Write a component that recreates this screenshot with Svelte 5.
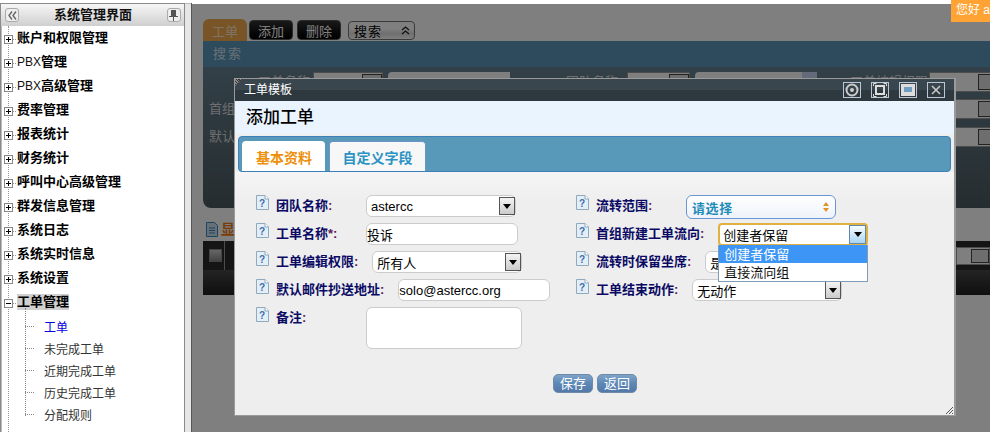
<script>
  const menus = [
    { parts: [{ t: '账户和权限管理' }] },
    { parts: [{ t: 'PBX', latin: true }, { t: '管理' }] },
    { parts: [{ t: 'PBX', latin: true }, { t: '高级管理' }] },
    { parts: [{ t: '费率管理' }] },
    { parts: [{ t: '报表统计' }] },
    { parts: [{ t: '财务统计' }] },
    { parts: [{ t: '呼叫中心高级管理' }] },
    { parts: [{ t: '群发信息管理' }] },
    { parts: [{ t: '系统日志' }] },
    { parts: [{ t: '系统实时信息' }] },
    { parts: [{ t: '系统设置' }] }
  ];
  const subs = ['工单', '未完成工单', '近期完成工单', '历史完成工单', '分配规则'];
</script>

{#snippet help()}
  <svg class="help" width="13" height="15" viewBox="0 0 13 15">
    <path d="M.5.5h8.500l3.500 3.500v10.500h-12z" fill="#e4eef6" stroke="#8fa9bd" />
    <path d="M9 .5v3.500h3.500" fill="#fff" stroke="#8fa9bd" />
    <text x="6" y="12" text-anchor="middle" class="helpq">?</text>
  </svg>
{/snippet}

{#snippet arrow()}
  <span class="arrow"><i></i></span>
{/snippet}

<div class="app">
  <aside class="side">
    <header class="sidehead">
      <span class="sidebtn">
        <svg width="9" height="9" viewBox="0 0 9 9"><path d="M4 .5L1 4.500l3 4M8 .5L5 4.500l3 4" fill="none" stroke="#666" stroke-width="1.400" /></svg>
      </span>
      <span class="sidetitle">系统管理界面</span>
      <span class="sidebtn">
        <svg width="9" height="11" viewBox="0 0 9 11"><path d="M2 0h5v6h2v1H5v4H4V7H0V6h2z" fill="#555" /></svg>
      </span>
    </header>
    <ul class="tree">
      {#each menus as m}
        <li class="node">
          <span class="box plus"></span><span class="dots"></span>
          <span class="nodetext">{#each m.parts as p}{#if p.latin}<span class="latin">{p.t}</span>{:else}{p.t}{/if}{/each}</span>
        </li>
      {/each}
      <li class="node">
        <span class="box"></span><span class="dots"></span>
        <span class="nodetext current">工单管理</span>
      </li>
      <ul class="subtree">
        {#each subs as s, i}
          <li class="sub" class:active={i === 0}><span class="subdots"></span>{s}</li>
        {/each}
      </ul>
    </ul>
  </aside>

  <div class="split"></div>

  <main class="main">
    <nav class="tabs">
      <span class="tab on">工单</span>
      <span class="tab blk">添加</span>
      <span class="tab blk">删除</span>
      <span class="searchtoggle">搜索
        <svg width="9" height="9" viewBox="0 0 9 9"><path d="M1 4l3.500-3L8 4M1 8l3.500-3L8 8" fill="none" stroke="#222" stroke-width="1.300" /></svg>
      </span>
    </nav>
    <div class="searchbar">搜索</div>
    <section class="panel">
      <div class="prow first">
        <span class="plabel l1">工单名称:</span>
        <span class="psel"></span>
        <span class="pinput"></span>
        <span class="plabel l2">团队名称:</span>
        <span class="psel mid"></span>
        <span class="pinput"><i></i></span>
        <span class="plabel l3">工单编辑权限:</span>
        <span class="psel"></span>
      </div>
      <div class="prow"><span class="plabel">首组</span><span class="psel push"></span></div>
      <div class="prow third"><span class="plabel">默认</span><span class="psel push"></span></div>
    </section>
    <div class="listtitle">
      <svg width="12" height="15" viewBox="0 0 12 15"><path d="M.5.5h8l3 3v11H.5z" fill="#cfe0ee" stroke="#3f88c5" /><path d="M3 6h6M3 8.500h6M3 11h6" stroke="#3f88c5" /></svg>
      <span>显示</span>
    </div>
    <div class="thead">
      <span class="check"></span><span class="sep"></span>
      <span class="psel tsel"></span>
    </div>
    <div class="trow"></div>
  </main>

  <div class="overlay"></div>
  <div class="hello">您好 a</div>

  <div class="dialog">
    <div class="dtitle">
      <i class="grip"></i>
      <span class="dtitletext">工单模板</span>
      <span class="dbtns">
        <span class="dbtn"><svg width="14" height="14" viewBox="0 0 14 14"><circle cx="7" cy="7" r="5.500" fill="none" stroke="#ccc" stroke-width="2" /><circle cx="7" cy="7" r="2" fill="#ccc" /></svg></span>
        <span class="dbtn"><svg width="14" height="14" viewBox="0 0 14 14"><rect x="3" y="3" width="8" height="8" fill="none" stroke="#ddd" stroke-width="2" /><path d="M.5 3V.500h3M10.500 .5h3v2.500M13.500 11v2.500h-3M3.500 13.500h-3V11" fill="none" stroke="#ddd" /></svg></span>
        <span class="dbtn"><svg width="14" height="12" viewBox="0 0 14 12"><rect x="0" y="0" width="14" height="12" fill="#ddd" /><rect x="3" y="3" width="8" height="5" fill="#6f9fc0" /></svg></span>
        <span class="dbtn"><svg width="10" height="10" viewBox="0 0 10 10"><path d="M1 1l8 8M9 1l-8 8" stroke="#ccc" stroke-width="1.500" /></svg></span>
      </span>
    </div>
    <h2 class="dhead">添加工单</h2>
    <div class="dtabs">
      <span class="dtab sel">基本资料</span>
      <span class="dtab">自定义字段</span>
    </div>
    <form class="dbody">
      <div class="cols">
        <div class="col">
          <div class="row">
            {@render help()}<label>团队名称<em>:</em></label>
            <span class="ctl sel w150">astercc{@render arrow()}</span>
          </div>
          <div class="row">
            {@render help()}<label>工单名称<em>*:</em></label>
            <span class="ctl inp w152">投诉</span>
          </div>
          <div class="row">
            {@render help()}<label>工单编辑权限<em>:</em></label>
            <span class="ctl sel w150">所有人{@render arrow()}</span>
          </div>
          <div class="row">
            {@render help()}<label>默认邮件抄送地址<em>:</em></label>
            <span class="ctl inp w152">solo@astercc.org</span>
          </div>
          <div class="row area">
            {@render help()}<label>备注<em>:</em></label>
            <span class="ctl textarea"></span>
          </div>
        </div>
        <div class="col">
          <div class="row">
            {@render help()}<label>流转范围<em>:</em></label>
            <span class="ctl fancy">请选择<svg width="6" height="10" viewBox="0 0 6 10"><path d="M3 0l3 4H0zM3 10L0 6h6z" fill="#e0922a" /></svg></span>
          </div>
          <div class="row">
            {@render help()}<label>首组新建工单流向<em>:</em></label>
            <span class="ctl sel focus">创建者保留{@render arrow()}
              <span class="menu">
                <span class="opt hot">创建者保留</span>
                <span class="opt">直接流向组</span>
              </span>
            </span>
          </div>
          <div class="row">
            {@render help()}<label>流转时保留坐席<em>:</em></label>
            <span class="ctl sel w150">是{@render arrow()}</span>
          </div>
          <div class="row">
            {@render help()}<label>工单结束动作<em>:</em></label>
            <span class="ctl sel w150">无动作{@render arrow()}</span>
          </div>
        </div>
      </div>
      <div class="actions">
        <button type="button">保存</button>
        <button type="button">返回</button>
      </div>
      <i class="resize"></i>
    </form>
  </div>
</div>

<style>
  :global(body) { margin: 0; background: #fff; }
  .app {
    position: relative; width: 990px; height: 432px; overflow: hidden; display: flex;
    font-family: "Liberation Sans", "Noto Sans CJK SC", sans-serif; font-size: 13px; color: #000;
  }
  .app * { box-sizing: border-box; }

  .side {
    width: 185px; flex: none; margin-top: 3px; height: 429px;
    border: 1px solid #8a8a8a; border-bottom: 0; background: #fff; overflow: hidden;
    box-shadow: inset 1px 0 0 #bbb;
  }
  .sidehead {
    height: 22px; display: flex; align-items: center; justify-content: space-between;
    padding: 0 3px 0 4px; background: linear-gradient(#f6f6f6, #cfcfcf);
  }
  .sidetitle { font-weight: 700; font-size: 13px; line-height: 20px; color: #111; }
  .sidebtn {
    width: 14px; height: 14px; border: 1px solid #aaa; border-radius: 3px; background: #eee;
    display: flex; align-items: center; justify-content: center;
  }
  .tree, .subtree { list-style: none; margin: 0; padding: 0; }
  .tree { position: relative; padding-top: 1px; }
  .tree::before {
    content: ""; position: absolute; left: 7px; top: 0; height: 420px; border-left: 1px dotted #999;
  }
  .node { height: 24px; display: flex; align-items: center; padding-left: 3px; position: relative; }
  .box { width: 9px; height: 9px; flex: none; border: 1px solid #888; background: #fff; position: relative; }
  .box::before { content: ""; position: absolute; left: 1px; top: 3px; width: 5px; height: 1px; background: #000; }
  .box.plus::after { content: ""; position: absolute; left: 3px; top: 1px; width: 1px; height: 5px; background: #000; }
  .dots { width: 3px; border-top: 1px dotted #999; }
  .nodetext { font-weight: 700; font-size: 13px; line-height: 16px; margin: 0 0 2px 1px; color: #000; }
  .latin { font-weight: 400; font-size: 12px; color: #111; }
  .current { background: #d0d0d0; }
  .subtree { position: relative; }
  .subtree::before {
    content: ""; position: absolute; left: 24px; top: -7px; height: 108px; border-left: 1px dotted #888;
  }
  .sub {
    height: 22px; display: flex; align-items: center; font-size: 12px; color: #333; padding-left: 24px;
  }
  .sub.active { color: #0000e0; }
  .subdots { width: 9px; margin-right: 10px; border-top: 1px dotted #888; }

  .split { width: 6px; flex: none; background: #e6e6e6; margin-top: 3px; box-shadow: inset 0 1px 0 #bbb; }

  .main {
    flex: 1; min-width: 0; margin-top: 3px; padding: 16px 0 0 11px; border-left: 1px solid #555; background: #fff; overflow: hidden;
  }
  .tabs { display: flex; height: 22px; align-items: flex-end; }
  .tab {
    width: 44px; height: 20px; color: #fff; display: flex; align-items: center; justify-content: center;
    font-size: 13px; border-radius: 4px; margin-right: 4px; background: linear-gradient(#333 0, #111 60%, #000); border: 1px solid #555; margin-bottom: 1px;
  }
  .tab.on {
    height: 22px; margin-right: 2px; margin-bottom: 0; border: 0; border-radius: 6px 6px 0 0;
    background: #f2a84c; color: #ffe8c8;
  }
  .searchtoggle {
    margin-left: 3px; width: 67px; height: 19px; margin-bottom: 1px; border: 1px solid #777; border-radius: 4px;
    display: flex; align-items: center; justify-content: space-between; padding: 0 4px 0 5px;
    font-size: 13px; letter-spacing: 1px; background: linear-gradient(#fff 40%, #ddd 70%, #fff);
  }
  .searchbar {
    height: 26px; background: #5a96b9; color: #cfe0ea; padding-left: 10px; line-height: 26px; font-size: 13px; letter-spacing: 2px;
  }
  .panel {
    height: 141px; padding-top: 5px; background: linear-gradient(#65808f, #4c5a60); border-radius: 0 0 0 8px; color: #fff; overflow: hidden;
  }
  .prow { height: 20px; margin-bottom: 7px; display: flex; align-items: center; padding-left: 6px; }
  .prow.third { margin-top: 8px; }
  .plabel { font-size: 13px; color: #ddd; white-space: nowrap; flex: none; margin-bottom: 4px; }
  .l1 { margin-left: 49px; width: 55px; }
  .l2 { margin-left: 56px; width: 61px; }
  .l3 { margin-left: 33px; width: 79px; }
  .psel { width: 70px; height: 20px; background: #fff; border: 1px solid #999; flex: none; position: relative; }
  .psel::after {
    content: ""; position: absolute; right: 0; top: 1px; bottom: 1px; width: 18px; background: #ddd; border: 1px solid #444;
  }
  .psel.mid { width: 63px; }
  .psel.push { margin-left: auto; margin-right: -9px; }
  .pinput { width: 122px; height: 20px; background: #fff; margin-left: 5px; border-radius: 4px 0 0 0; flex: none; display: flex; justify-content: flex-end; }
  .pinput i { width: 15px; background: #c8d4f4; }
  .listtitle {
    height: 33px; padding: 14px 0 0 3px; display: flex; gap: 3px; font-size: 14px; font-weight: 700; color: #f07a10; line-height: 15px;
  }
  .thead {
    height: 29px; background: #2a2a2a; display: flex; align-items: center; padding-left: 6px;
  }
  .check { width: 13px; height: 13px; border: 1px solid #888; background: linear-gradient(#ccc, #888); }
  .sep { width: 1px; height: 29px; background: #999; margin-left: 2px; }
  .tsel { width: 34px; height: 18px; margin-left: auto; }
  .tsel::after { width: 16px; }
  .trow { height: 25px; background: linear-gradient(#484848, #1e1e1e); }

  .overlay { position: absolute; left: 192px; top: 4px; right: 0; bottom: 0; background: rgba(0, 0, 0, .5); }
  .hello {
    position: absolute; right: 0; top: 0; width: 39px; height: 22px; background: #ffa434; color: #fff;
    padding-left: 5px; line-height: 20px; font-size: 12px; white-space: nowrap; overflow: hidden;
  }

  .dialog {
    position: absolute; left: 234px; top: 78px; width: 722px; height: 338px;
    border: 1px solid #9a9a9a; border-right-width: 2px; background: #eee; display: flex; flex-direction: column;
  }
  .dtitle {
    height: 22px; flex: none; display: flex; align-items: center; justify-content: space-between; padding: 0 9px 0 9px;
    background: linear-gradient(#3a464d 0 50%, #2d383f 50%); position: relative;
  }
  .grip {
    position: absolute; left: 0; top: 0; width: 7px; height: 7px;
    background: repeating-linear-gradient(45deg, #888 0 1px, #333 1px 2px); clip-path: polygon(0 0, 100% 0, 0 100%);
  }
  .dtitletext { color: #fff; font-size: 12px; line-height: 16px; margin-bottom: 1px; }
  .dbtns { display: flex; gap: 10px; }
  .dbtn {
    width: 18px; height: 16px; border: 1px solid #b9c7d6; display: flex; align-items: center; justify-content: center;
  }
  .dbtn svg { display: block; }
  .dhead {
    margin: 0; height: 33px; flex: none; background: #eaf4fe; padding-left: 11px; font-size: 17px; font-weight: 500; line-height: 33px; color: #000;
  }
  .dtabs {
    flex: none; height: 36px; margin: 2px 3px 0 3px; padding: 6px 0 0 3px; display: flex; gap: 4px; align-items: flex-end;
    background: #5899ba; border: 1px solid #3c7fb9; border-radius: 4px;
  }
  .dtab {
    height: 30px; width: 97px; border: 1px solid #6c95c6; border-bottom: 0; border-radius: 4px 4px 0 0; background: #f7f7f7;
    color: #2b93c4; font-weight: 700; font-size: 14px; display: flex; align-items: center; justify-content: center;
  }
  .dtab.sel { width: 83px; padding-right: 3px; background: #fff; color: #ed8f0a; border-color: #fff; }
  .dbody {
    flex: 1; position: relative; display: flex; flex-direction: column; background: linear-gradient(#f5f5f5, #eee 30px); padding: 23px 0 0 21px;
  }
  .cols { display: flex; height: 176px; }
  .col { width: 320px; }
  .row { height: 28px; display: flex; align-items: flex-start; }
  .row.area { height: 44px; }
  .help { flex: none; margin: 0 7px 0 0; }
  .helpq { font: 700 10px "Liberation Sans", sans-serif; fill: #3f6fb0; }
  label {
    min-width: 76px; margin-right: 14px; margin-top: 1px; font-weight: 700; font-size: 13px; line-height: 20px; color: #0a0a64; white-space: nowrap;
  }
  label em { font-style: normal; color: #5a1a5a; }
  .ctl { display: flex; align-items: center; background: #fff; flex: none; position: relative; border-radius: 6px; border: 1px solid #ccc; height: 22px; font-size: 13px; }
  .sel { padding-left: 4px; }
  .w150 { width: 150px; }
  .w152 { width: 152px; }
  .textarea { width: 156px; height: 42px; }
  .arrow {
    position: absolute; right: 0; top: 1px; bottom: 1px; width: 16px; border: 1px solid #555; background: linear-gradient(#f4f4f4, #ccc);
    display: flex; align-items: center; justify-content: center;
  }
  .arrow i { width: 0; height: 0; border: 4px solid transparent; border-top: 5px solid #000; border-bottom: 0; }
  .fancy {
    width: 150px; height: 24px; padding: 0 6px 0 5px; justify-content: space-between; border-color: #6c95d6;
    color: #1f8bb8; font-weight: 700; font-size: 13px; letter-spacing: .6px; background: linear-gradient(#fff, #eef3fa);
  }
  .focus { width: 150px; height: 23px; padding-left: 3px; border: 2px solid #e0b040; border-radius: 4px; z-index: 2; }
  .focus .arrow { width: 17px; top: 0; bottom: 0; right: 0; background: linear-gradient(#f8fcff, #a9d5f2); border: 1px solid #5f88b0; }
  .menu {
    position: absolute; left: -2px; top: 20px; width: 150px; height: 37px; background: #fff; border: 1px solid #7f9db9;
    border-top: 0; display: flex; flex-direction: column; border-radius: 0;
  }
  .opt { height: 18px; padding-left: 5px; line-height: 19px; color: #111; }
  .opt.hot { background: #3d96f5; color: #fff; }
  .actions { display: flex; gap: 4px; padding: 3px 0 0 297px; }
  .actions button {
    width: 40px; height: 19px; padding: 0; border: 1px solid #6f89a8; border-radius: 5px;
    background: linear-gradient(#7ea3c8, #5d88b6 50%, #5379a8); color: #fff; font: 13px "Liberation Sans", "Noto Sans CJK SC", sans-serif; line-height: 16px;
  }
  .resize {
    position: absolute; right: 1px; bottom: 1px; width: 8px; height: 8px;
    background: repeating-linear-gradient(135deg, #555 0 1px, transparent 1px 2px); clip-path: polygon(100% 0, 100% 100%, 0 100%);
  }
</style>
